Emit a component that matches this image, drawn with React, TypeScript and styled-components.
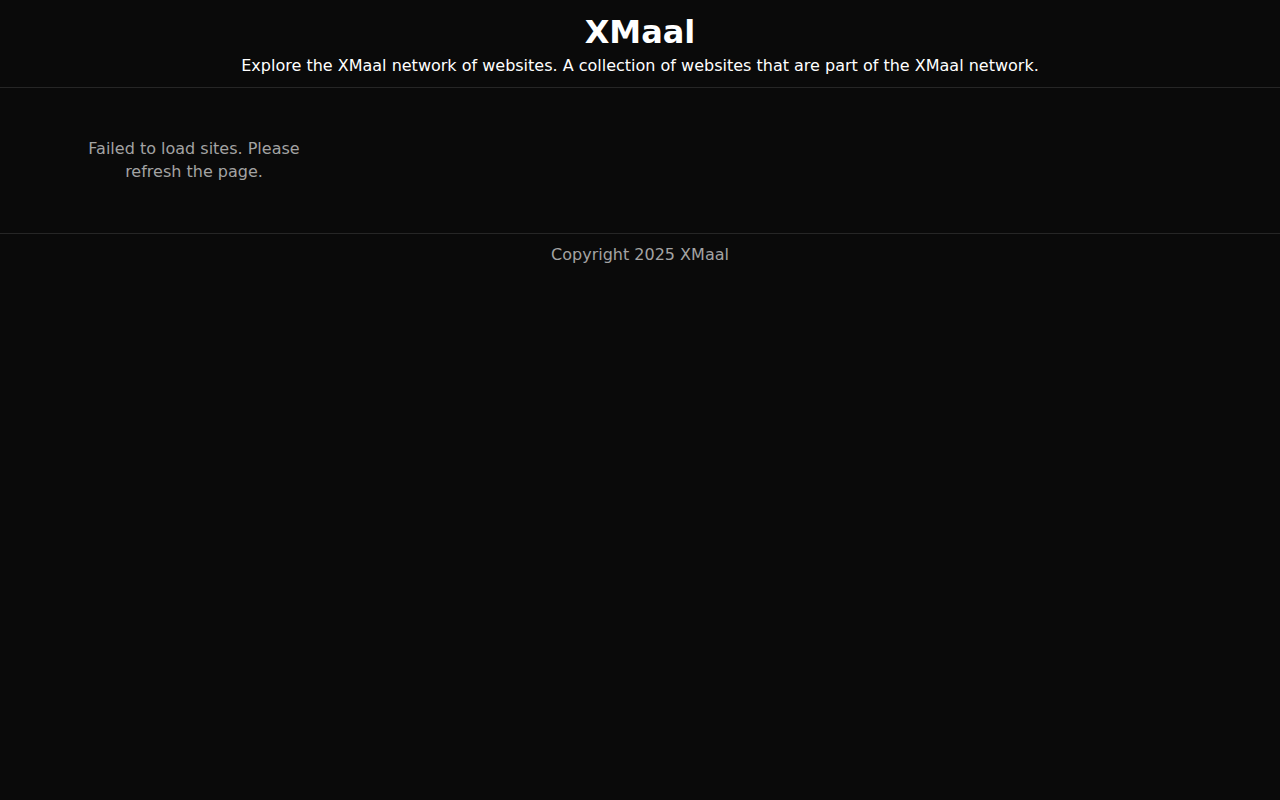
import React from "react";
import styled, { createGlobalStyle } from "styled-components";

const GlobalStyle = createGlobalStyle`
  html, body {
    margin: 0;
    padding: 0;
    background: #0a0a0a;
    color: #ffffff;
    font-family: "DejaVu Sans", sans-serif;
  }
`;

const Header = styled.header`
  padding: 13px 16px 9px;
  text-align: center;
  border-bottom: 1px solid #262626;
`;

const Title = styled.h1`
  margin: 0;
  font-size: 32px;
  font-weight: 700;
`;

const Subtitle = styled.p`
  margin: 3px 0 0;
  font-size: 16px;
  line-height: 24px;
`;

const Main = styled.main`
  padding: 49px 80px 50px;
  display: grid;
  grid-template-columns: repeat(auto-fill, minmax(228px, 1fr));
`;

const ErrorText = styled.p`
  margin: 0;
  width: 228px;
  text-align: center;
  color: #a3a3a3;
  font-size: 16px;
  line-height: 23px;
`;

const Footer = styled.footer`
  padding: 9px 16px;
  text-align: center;
  border-top: 1px solid #262626;
  color: #a3a3a3;
  font-size: 16px;
  line-height: 24px;
`;

const App: React.FunctionComponent = () => {
  return (
    <>
      <GlobalStyle />
      <Header>
        <Title>XMaal</Title>
        <Subtitle>
          Explore the XMaal network of websites. A collection of websites that
          are part of the XMaal network.
        </Subtitle>
      </Header>
      <Main>
        <ErrorText>Failed to load sites. Please refresh the page.</ErrorText>
      </Main>
      <Footer>Copyright 2025 XMaal</Footer>
    </>
  );
};

export default App;
